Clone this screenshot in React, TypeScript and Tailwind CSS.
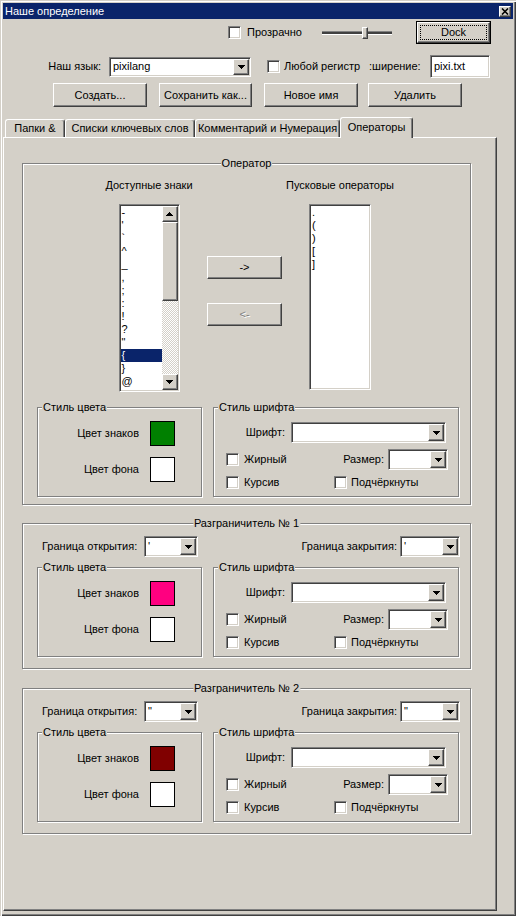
import React from "react";

const raised =
  "border border-t-white border-l-white border-b-[#404040] border-r-[#404040] shadow-[inset_-1px_-1px_0_#808080]";
const sunken =
  "border border-t-[#808080] border-l-[#808080] border-b-white border-r-white shadow-[inset_1px_1px_0_#404040,inset_-1px_-1px_0_#d4d0c8]";

function Arrow({ up }: { up?: boolean }) {
  return (
    <svg width="7" height="4" viewBox="0 0 7 4" shapeRendering="crispEdges">
      {up ? (
        <path d="M3 0h1v1h1v1h1v1h1v1H0V3h1V2h1V1h1z" fill="#000" />
      ) : (
        <path d="M0 0h7v1H6v1H5v1H4v1H3V3H2V2H1V1H0z" fill="#000" />
      )}
    </svg>
  );
}

function Check({ className = "" }: { className?: string }) {
  return <span className={`${sunken} bg-white w-[13px] h-[13px] block shrink-0 ${className}`} />;
}

function Combo({ className = "", value = "" }: { className?: string; value?: string }) {
  return (
    <div className={`${sunken} bg-white p-px flex shrink-0 ${className}`}>
      <div className="flex-1 pl-[2px] flex items-center overflow-hidden whitespace-nowrap">{value}</div>
      <div className={`${raised} bg-[#d4d0c8] w-[16px] flex items-center justify-center`}>
        <Arrow />
      </div>
    </div>
  );
}

function Btn({ className = "", children }: { className?: string; children: React.ReactNode }) {
  return (
    <div className={`${raised} bg-[#d4d0c8] flex items-center justify-center shrink-0 whitespace-nowrap ${className}`}>
      {children}
    </div>
  );
}

function Group({
  title,
  center,
  className = "",
  children,
}: {
  title: string;
  center?: boolean;
  className?: string;
  children: React.ReactNode;
}) {
  return (
    <div className={`relative border border-[#808080] shadow-[1px_1px_0_#fff,inset_1px_1px_0_#fff] shrink-0 ${className}`}>
      <span
        className={`absolute top-[-7px] bg-[#d4d0c8] px-px leading-[13px] whitespace-nowrap ${
          center ? "left-1/2 -translate-x-1/2" : "left-[4px]"
        }`}
      >
        {title}
      </span>
      {children}
    </div>
  );
}

function Tab({ className = "", children }: { className?: string; children: React.ReactNode }) {
  return (
    <div
      className={`h-[18px] border-t border-l border-r border-t-white border-l-white border-r-[#404040] shadow-[inset_-1px_0_0_#808080] rounded-t-[3px] flex items-center justify-center whitespace-nowrap ${className}`}
    >
      {children}
    </div>
  );
}

function ColorStyle({ color }: { color: string }) {
  return (
    <Group title="Стиль цвета" className="ml-[14px] w-[165px] h-[90px]">
      <div className="mt-[13px] flex items-center">
        <span className="w-[101px] text-right">Цвет знаков</span>
        <div className={`ml-[11px] w-[25px] h-[25px] border border-black ${color}`} />
      </div>
      <div className="mt-[11px] flex items-center">
        <span className="w-[101px] text-right">Цвет фона</span>
        <div className="ml-[11px] w-[25px] h-[25px] border border-black bg-white" />
      </div>
    </Group>
  );
}

function FontStyle() {
  return (
    <Group title="Стиль шрифта" className="ml-[11px] w-[246px] h-[90px]">
      <div className="mt-[14px] flex items-center">
        <span className="w-[71px] text-right">Шрифт:</span>
        <Combo className="ml-[6px] w-[155px] h-[21px]" />
      </div>
      <div className="mt-[6px] flex items-center pr-[10px]">
        <Check className="ml-[12px]" />
        <span className="ml-[5px]">Жирный</span>
        <span className="ml-auto">Размер:</span>
        <Combo className="ml-[4px] w-[60px] h-[21px]" />
      </div>
      <div className="mt-[6px] flex items-center h-[13px]">
        <Check className="ml-[12px]" />
        <span className="ml-[5px] w-[90px]">Курсив</span>
        <Check />
        <span className="ml-[4px]">Подчёркнуты</span>
      </div>
    </Group>
  );
}

function Delimiter({ n, mark, color, className = "" }: { n: number; mark: string; color: string; className?: string }) {
  return (
    <Group title={`Разграничитель № ${n}`} center className={`ml-[18px] w-[449px] h-[146px] ${className}`}>
      <div className="mt-[12px] flex items-center pl-[19px] pr-[10px]">
        <span className="w-[100px] whitespace-nowrap">Граница открытия:</span>
        <Combo className="ml-[2px] w-[54px] h-[21px]" value={mark} />
        <span className="ml-auto whitespace-nowrap">Граница закрытия:</span>
        <Combo className="ml-[3px] w-[60px] h-[21px]" value={mark} />
      </div>
      <div className="mt-[10px] flex">
        <ColorStyle color={color} />
        <FontStyle />
      </div>
    </Group>
  );
}

const available = ["-", "'", "`", "^", "_", ",", ";", ":", "!", "?", '"', "{", "}", "@"];
const trigger = [".", "(", ")", "[", "]"];

export default function App() {
  return (
    <div className="w-[516px] h-[916px] bg-[#d4d0c8] font-['Liberation_Sans',Arial,sans-serif] text-[11px] leading-[13px] text-black overflow-hidden flex flex-col shadow-[inset_1px_1px_0_#d4d0c8,inset_2px_2px_0_#fff,inset_-1px_-1px_0_#404040,inset_-2px_-2px_0_#808080]">
      {/* title bar */}
      <div className="mt-[3px] mx-[3px] h-[16px] bg-[#0a246a] flex items-center justify-between pl-[2px] pr-[2px] text-white">
        <span>Наше определение</span>
        <div className={`${raised} bg-[#d4d0c8] w-[12px] h-[11px] flex items-center justify-center`}>
          <svg width="8" height="7" viewBox="0 0 8 7">
            <path d="M1 0.5l6 6M7 0.5l-6 6" stroke="#000" strokeWidth="1.6" />
          </svg>
        </div>
      </div>

      {/* row 1 */}
      <div className="mt-[2px] h-[23px] flex items-center pl-[228px]">
        <Check />
        <span className="ml-[6px] w-[75px]">Прозрачно</span>
        <div className="relative w-[70px] h-[12px]">
          <div className="absolute left-0 right-0 top-[4px] h-[4px] border-t border-t-[#808080] border-b border-b-white bg-[#404040]" />
          <div className={`absolute left-[40px] top-0 w-[6px] h-[12px] bg-[#d4d0c8] ${raised}`} />
        </div>
        <div className="ml-[24px] w-[75px] h-[23px] border border-black">
          <div className={`${raised} h-full p-[2px]`}>
            <div className="h-full border border-dotted border-black flex items-center justify-center">Dock</div>
          </div>
        </div>
      </div>

      {/* row 2 */}
      <div className="mt-[11px] h-[23px] flex items-center">
        <span className="w-[101px] text-right">Наш язык:</span>
        <Combo className="ml-[8px] w-[142px] h-[20px]" value="pixilang" />
        <Check className="ml-[16px]" />
        <span className="ml-[4px] w-[85px] whitespace-nowrap">Любой регистр</span>
        <span className="w-[55px] whitespace-nowrap">:ширение:</span>
        <div className={`${sunken} bg-white ml-[6px] w-[60px] h-[23px] pl-[3px] flex items-center`}>pixi.txt</div>
      </div>

      {/* row 3 */}
      <div className="mt-[5px] flex">
        <Btn className="ml-[53px] w-[94px] h-[24px]">Создать...</Btn>
        <Btn className="ml-[12px] w-[93px] h-[24px]">Сохранить как...</Btn>
        <Btn className="ml-[12px] w-[94px] h-[24px]">Новое имя</Btn>
        <Btn className="ml-[10px] w-[94px] h-[24px]">Удалить</Btn>
      </div>

      {/* tabs */}
      <div className="mt-[10px] h-[20px] flex items-end pl-[5px]">
        <Tab className="w-[60px]">Папки &amp;</Tab>
        <Tab className="w-[130px]">Списки ключевых слов</Tab>
        <Tab className="w-[145px]">Комментарий и Нумерация</Tab>
        <Tab className="w-[73px] h-[21px] -mb-px relative z-10 bg-[#d4d0c8] items-start pt-[3px]">Операторы</Tab>
      </div>

      {/* panel */}
      <div className="ml-[3px] w-[494px] h-[774px] border border-t-white border-l-white border-r-[#404040] border-b-[#404040] shadow-[inset_-1px_-1px_0_#808080] flex flex-col">
        <Group title="Оператор" center className="ml-[18px] mt-[25px] w-[449px] h-[342px]">
          <div className="flex items-start">
            <div className="ml-[76px] w-[100px] flex flex-col items-center">
              <div className="mt-[15px] h-[14px] whitespace-nowrap">Доступные знаки</div>
              <div className={`${sunken} mt-[11px] w-[61px] h-[188px] bg-white p-px flex`}>
                <div className="flex-1 overflow-hidden">
                  {available.map((c, i) => (
                    <div
                      key={i}
                      className={`h-[13px] leading-[13px] pl-px ${c === "{" ? "bg-[#0a246a] text-white" : ""}`}
                    >
                      {c}
                    </div>
                  ))}
                </div>
                <div className="w-[16px] flex flex-col">
                  <div className={`${raised} bg-[#d4d0c8] h-[16px] flex items-center justify-center`}>
                    <Arrow up />
                  </div>
                  <div className={`${raised} bg-[#d4d0c8] h-[79px]`} />
                  <div className="flex-1 bg-[repeating-conic-gradient(#fff_0%_25%,#d4d0c8_0%_50%)] bg-[length:2px_2px]" />
                  <div className={`${raised} bg-[#d4d0c8] h-[16px] flex items-center justify-center`}>
                    <Arrow />
                  </div>
                </div>
              </div>
            </div>
            <div className="ml-[8px] mt-[92px] flex flex-col">
              <Btn className="w-[75px] h-[23px]">{"->"}</Btn>
              <Btn className="mt-[24px] w-[75px] h-[23px] text-[#808080] [text-shadow:1px_1px_0_#fff]">{"<-"}</Btn>
            </div>
            <div className="ml-[8px] w-[100px] flex flex-col items-center">
              <div className="mt-[15px] h-[14px] whitespace-nowrap">Пусковые операторы</div>
              <div className={`${sunken} mt-[11px] w-[62px] h-[186px] bg-white p-px`}>
                {trigger.map((c, i) => (
                  <div key={i} className="h-[13px] leading-[13px] pl-px">
                    {c}
                  </div>
                ))}
              </div>
            </div>
          </div>
          <div className="mt-[15px] flex">
            <ColorStyle color="bg-[#008000]" />
            <FontStyle />
          </div>
        </Group>

        <Delimiter n={1} mark="'" color="bg-[#ff0080]" className="mt-[18px]" />
        <Delimiter n={2} mark='"' color="bg-[#800000]" className="mt-[19px]" />
      </div>
    </div>
  );
}
